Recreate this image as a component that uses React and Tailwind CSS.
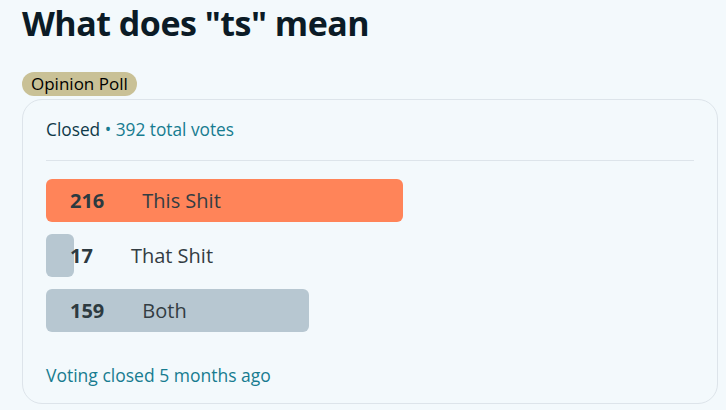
const opciones = [
  { votos: 216, texto: 'This Shit', ganadora: true },
  { votos: 17, texto: 'That Shit' },
  { votos: 159, texto: 'Both' },
];

const total = 392;

export default function App() {
  return (
    <div className="min-h-[410px] w-full bg-[#f3f9fc] pl-[22px] pr-2 pt-px text-[#0b1b26]" style={{ fontFamily: '"Open Sans", "Noto Sans", sans-serif' }}>
      <h1 className="text-[34px] font-bold leading-[44px] tracking-[-0.5px]">What does "ts" mean</h1>

      <div className="mt-[27px] flex">
        <span className="flex h-6 items-center rounded-full bg-[#c9c196] px-[9px] text-[17px] text-black">Opinion Poll</span>
      </div>

      <div className="mt-[3px] rounded-[20px] border border-[#dde4ea] pb-[14px] pl-[23px] pr-[23px] pt-4">
        <div className="text-[17.3px] leading-7">
          <span className="text-[#0e3a49]">Closed</span>
          <span className="text-[#177c90]"> • 392 total votes</span>
        </div>

        <div className="mt-4 h-px bg-[#dde4ea]" />

        <div className="mt-[18px] flex flex-col gap-3">
          {opciones.map((o) => (
            <div key={o.texto} className="relative h-[43px]">
              <div
                className={`absolute inset-y-0 left-0 rounded-md ${o.ganadora ? 'bg-[#ff8459]' : 'bg-[#b7c7d1]'}`}
                style={{ width: `${(o.votos / total) * 100}%` }}
              />
              <div className="relative flex h-full items-center pl-6 text-[20px]">
                <span className="font-bold text-[#2d3a40]">{o.votos}</span>
                <span className="ml-[38px] text-[#333d43]">{o.texto}</span>
              </div>
            </div>
          ))}
        </div>

        <div className="mt-[29px] text-[17.5px] leading-7 text-[#177c90]">Voting closed 5 months ago</div>
      </div>
    </div>
  );
}
